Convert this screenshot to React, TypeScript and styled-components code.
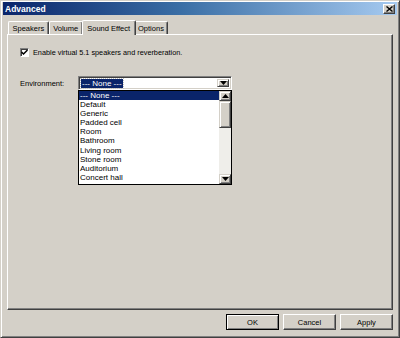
import React from "react";
import styled, { createGlobalStyle } from "styled-components";

const Global = createGlobalStyle`
  html, body { margin: 0; padding: 0; background: #d4d0c8; }
  body { font-family: "Liberation Sans", Arial, sans-serif; font-size: 7.5px; color: #000; }
  * { box-sizing: border-box; }
`;

const Window = styled.div`
  width: 400px;
  height: 338px;
  background: #d4d0c8;
  border-top: 1px solid #d4d0c8;
  border-left: 1px solid #d4d0c8;
  border-right: 1px solid #404040;
  border-bottom: 1px solid #404040;
  box-shadow: inset 1px 1px 0 #fff, inset -1px -1px 0 #808080;
  padding: 1px 2px 2px 2px;
  display: flex;
  flex-direction: column;
`;

const TitleBar = styled.div`
  height: 13px;
  background: linear-gradient(90deg, #0a246a 0%, #3a6ea5 45%, #a6caf0 100%);
  display: flex;
  align-items: center;
  justify-content: space-between;
  padding: 0 2px 0 2px;
`;

const TitleText = styled.span`
  color: #fff;
  font-weight: bold;
  font-size: 8.5px;
`;

const CloseButton = styled.div`
  width: 12px;
  height: 10px;
  margin-top: 1px;
  background: #d4d0c8;
  border-top: 1px solid #fff;
  border-left: 1px solid #fff;
  border-right: 1px solid #404040;
  border-bottom: 1px solid #404040;
  box-shadow: inset -1px -1px 0 #808080;
  display: flex;
  align-items: center;
  justify-content: center;
`;

const Body = styled.div`
  padding: 5px 4px 0 4px;
  display: flex;
  flex-direction: column;
`;

const TabRow = styled.div`
  display: flex;
  align-items: flex-end;
  height: 14px;
  padding-left: 1px;
  position: relative;
  z-index: 2;
`;

const Tab = styled.div<{ $active?: boolean }>`
  height: ${(p) => (p.$active ? "15px" : "13px")};
  margin: ${(p) => (p.$active ? "0 -2px -1px -1px" : "0")};
  padding: ${(p) => (p.$active ? "1px 4.5px 0 4.5px" : "0 3.5px")};
  background: #d4d0c8;
  border-top: 1px solid #fff;
  border-left: 1px solid #fff;
  border-right: 1px solid #404040;
  box-shadow: inset -1px 0 0 #808080;
  border-radius: 2px 2px 0 0;
  display: flex;
  align-items: center;
  white-space: nowrap;
  position: relative;
  z-index: ${(p) => (p.$active ? 3 : 1)};
`;

const Panel = styled.div`
  height: 276px;
  border-top: 1px solid #fff;
  border-left: 1px solid #fff;
  border-right: 1px solid #404040;
  border-bottom: 1px solid #404040;
  box-shadow: inset -1px -1px 0 #808080;
  padding: 13px 12px;
  display: flex;
  flex-direction: column;
`;

const CheckRow = styled.div`
  display: flex;
  align-items: center;
  gap: 4px;
`;

const CheckLabel = styled.span`
  font-size: 7.3px;
`;

const CheckBox = styled.div`
  width: 9px;
  height: 9px;
  background: #fff;
  border-top: 1px solid #808080;
  border-left: 1px solid #808080;
  border-right: 1px solid #fff;
  border-bottom: 1px solid #fff;
  box-shadow: inset 1px 1px 0 #404040;
  display: flex;
  align-items: center;
  justify-content: center;
`;

const FieldRow = styled.div`
  display: flex;
  align-items: center;
  margin-top: 19px;
`;

const Label = styled.span`
  width: 58px;
`;

const ComboWrap = styled.div`
  position: relative;
  width: 154px;
`;

const Combo = styled.div`
  height: 14px;
  background: #fff;
  border-top: 1px solid #808080;
  border-left: 1px solid #808080;
  border-right: 1px solid #fff;
  border-bottom: 1px solid #fff;
  box-shadow: inset 1px 1px 0 #404040, inset -1px -1px 0 #d4d0c8;
  display: flex;
  align-items: center;
  padding: 2px;
`;

const ComboValue = styled.div`
  flex: 1;
  height: 100%;
  display: flex;
  align-items: center;
`;

const Selected = styled.span`
  background: #0a246a;
  color: #fff;
  padding: 0 1px;
  font-size: 8px;
  outline: 1px dotted #c0c0c0;
`;

const ArrowButton = styled.div<{ $square?: boolean }>`
  width: 12px;
  height: ${(p) => (p.$square ? "10px" : "100%")};
  background: #d4d0c8;
  border-top: 1px solid #d4d0c8;
  border-left: 1px solid #d4d0c8;
  border-right: 1px solid #404040;
  border-bottom: 1px solid #404040;
  box-shadow: inset 1px 1px 0 #fff, inset -1px -1px 0 #808080;
  display: flex;
  align-items: center;
  justify-content: center;
  flex: none;
`;

const DropList = styled.div`
  position: absolute;
  left: 0;
  top: 100%;
  width: 154px;
  height: 95px;
  background: #fff;
  border: 1px solid #000;
  display: flex;
  z-index: 10;
`;

const Items = styled.div`
  flex: 1;
  display: flex;
  flex-direction: column;
`;

const Item = styled.div<{ $sel?: boolean }>`
  height: 9.1px;
  line-height: 9.1px;
  padding-left: 1px;
  font-size: 8px;
  background: ${(p) => (p.$sel ? "#0a246a" : "transparent")};
  color: ${(p) => (p.$sel ? "#fff" : "#000")};
  white-space: nowrap;
`;

const ScrollBar = styled.div`
  width: 12px;
  display: flex;
  flex-direction: column;
  background: #efeeea;
`;

const Thumb = styled.div`
  height: 27px;
  background: #d4d0c8;
  border-top: 1px solid #d4d0c8;
  border-left: 1px solid #d4d0c8;
  border-right: 1px solid #404040;
  border-bottom: 1px solid #404040;
  box-shadow: inset 1px 1px 0 #fff, inset -1px -1px 0 #808080;
`;

const Track = styled.div`
  flex: 1;
`;

const ButtonRow = styled.div`
  display: flex;
  justify-content: flex-end;
  gap: 4px;
  margin-top: 4px;
  padding-right: 0;
`;

const Button = styled.div<{ $default?: boolean }>`
  width: 53px;
  height: 16px;
  background: #d4d0c8;
  border: 1px solid;
  border-color: ${(p) => (p.$default ? "#000" : "#fff #404040 #404040 #fff")};
  box-shadow: ${(p) =>
    p.$default
      ? "inset 1px 1px 0 #fff, inset -1px -1px 0 #808080"
      : "inset -1px -1px 0 #808080"};
  display: flex;
  align-items: center;
  justify-content: center;
`;

const Down = () => (
  <svg width="7" height="4" viewBox="0 0 7 4">
    <path d="M0 0h7L3.5 4z" fill="#000" />
  </svg>
);
const Up = () => (
  <svg width="7" height="4" viewBox="0 0 7 4">
    <path d="M0 4h7L3.5 0z" fill="#000" />
  </svg>
);

const items = [
  "--- None ---",
  "Default",
  "Generic",
  "Padded cell",
  "Room",
  "Bathroom",
  "Living room",
  "Stone room",
  "Auditorium",
  "Concert hall",
];

export default function App() {
  return (
    <>
      <Global />
      <Window>
        <TitleBar>
          <TitleText>Advanced</TitleText>
          <CloseButton>
            <svg width="7" height="6" viewBox="0 0 7 6">
              <path d="M0.5 0.5L6.5 5.5M6.5 0.5L0.5 5.5" stroke="#000" strokeWidth="1.4" />
            </svg>
          </CloseButton>
        </TitleBar>
        <Body>
          <TabRow>
            <Tab>Speakers</Tab>
            <Tab>Volume</Tab>
            <Tab $active>Sound Effect</Tab>
            <Tab>Options</Tab>
          </TabRow>
          <Panel>
            <CheckRow>
              <CheckBox>
                <svg width="7" height="7" viewBox="0 0 7 7">
                  <path d="M0.5 3L2.5 5L6.5 1" stroke="#000" strokeWidth="1.5" fill="none" />
                </svg>
              </CheckBox>
              <CheckLabel>Enable virtual 5.1 speakers and reverberation.</CheckLabel>
            </CheckRow>
            <FieldRow>
              <Label>Environment:</Label>
              <ComboWrap>
                <Combo>
                  <ComboValue>
                    <Selected>--- None ---</Selected>
                  </ComboValue>
                  <ArrowButton>
                    <Down />
                  </ArrowButton>
                </Combo>
                <DropList>
                  <Items>
                    {items.map((it, i) => (
                      <Item key={it} $sel={i === 0}>
                        {it}
                      </Item>
                    ))}
                  </Items>
                  <ScrollBar>
                    <ArrowButton $square>
                      <Up />
                    </ArrowButton>
                    <Thumb />
                    <Track />
                    <ArrowButton $square>
                      <Down />
                    </ArrowButton>
                  </ScrollBar>
                </DropList>
              </ComboWrap>
            </FieldRow>
          </Panel>
          <ButtonRow>
            <Button $default>OK</Button>
            <Button>Cancel</Button>
            <Button>Apply</Button>
          </ButtonRow>
        </Body>
      </Window>
    </>
  );
}
